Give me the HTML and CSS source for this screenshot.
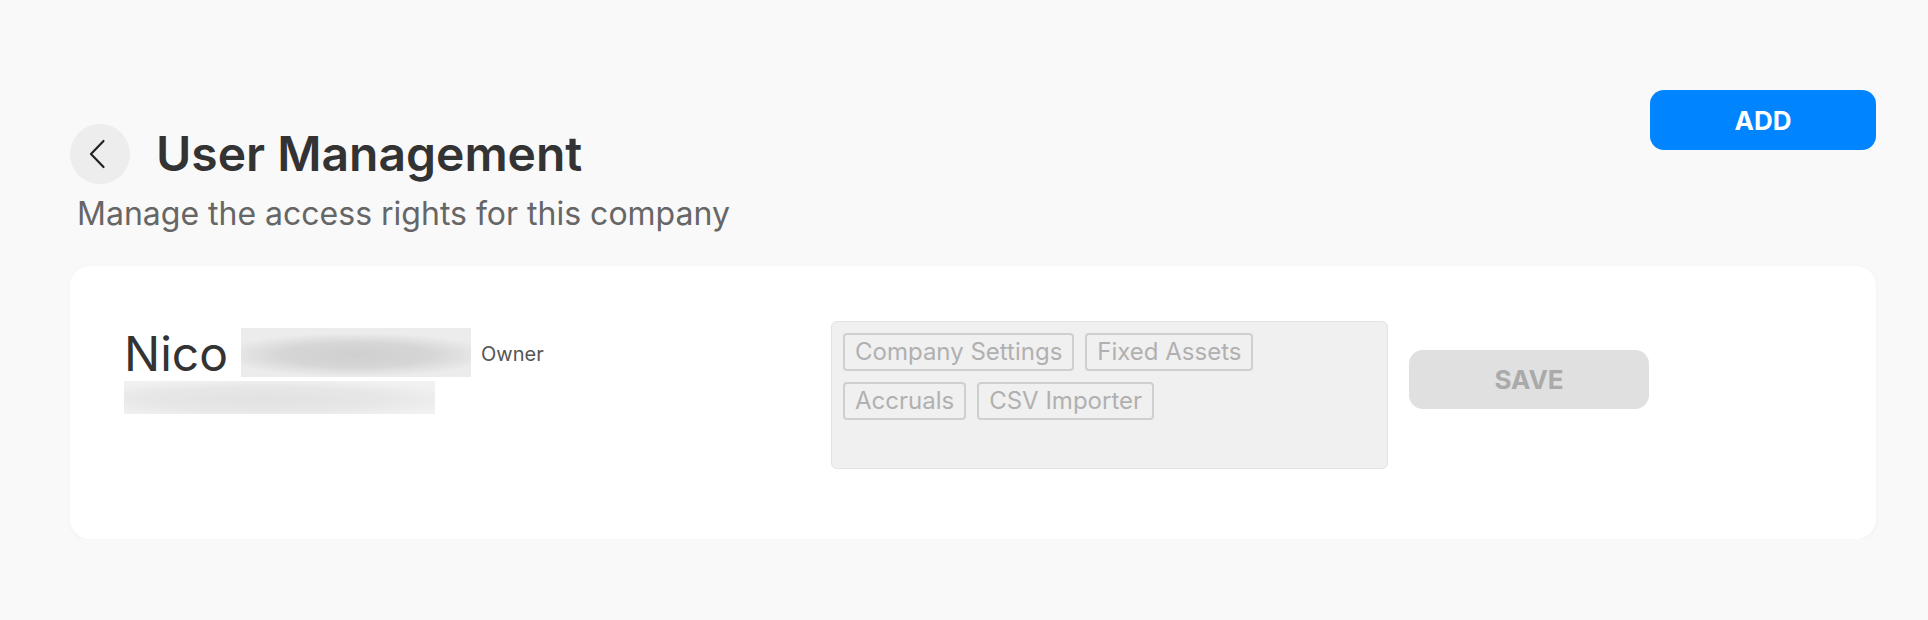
FILE: index.html
```html
<!DOCTYPE html>
<html lang="en">
<head>
<meta charset="utf-8">
<title>User Management</title>
<link rel="stylesheet" href="styles.css">
</head>
<body>
<div class="page">
  <div class="header">
    <div class="header-left">
      <div class="title-row">
        <button class="back" aria-label="Back">
          <svg width="20" height="30" viewBox="0 0 20 30"><path d="M15.5 2 L3 15 L15.5 28" fill="none" stroke="#222" stroke-width="2.2" stroke-linecap="round" stroke-linejoin="round"/></svg>
        </button>
        <h1 class="title">User Management</h1>
      </div>
      <p class="subtitle">Manage the access rights for this company</p>
    </div>
    <button class="add">ADD</button>
  </div>

  <div class="card">
    <div class="row">
      <div class="user">
        <div class="name-line">
          <span class="name">Nico</span>
          <span class="blur-name"></span>
          <span class="owner">Owner</span>
        </div>
        <div class="blur-email"></div>
      </div>
      <div class="perms">
        <span class="tag">Company Settings</span>
        <span class="tag">Fixed Assets</span>
        <span class="tag">Accruals</span>
        <span class="tag">CSV Importer</span>
      </div>
      <button class="save">SAVE</button>
    </div>
  </div>
</div>
</body>
</html>
```

FILE: styles.css
```css
* { box-sizing: border-box; }
html, body { margin: 0; padding: 0; }
body {
  background: #f9f9f9;
  font-family: Inter, "Noto Sans", sans-serif;
  color: #333;
}
.page {
  padding: 90px 52px 0 70px;
}
.header {
  display: flex;
  justify-content: space-between;
  align-items: flex-start;
}
.header-left {
  padding-top: 34px;
}
.title-row {
  display: flex;
  align-items: center;
  gap: 26px;
}
.back {
  width: 60px;
  height: 60px;
  border-radius: 50%;
  border: none;
  background: #ededed;
  display: flex;
  align-items: center;
  justify-content: center;
  padding: 0 4px 0 0;
  cursor: pointer;
}
.title {
  margin: 0;
  font-size: 48px;
  line-height: 58px;
  font-weight: 600;
  color: #333;
}
.subtitle {
  margin: 11px 0 0 0;
  padding-left: 7px;
  font-size: 32px;
  line-height: 38px;
  color: #666;
}
.add {
  width: 226px;
  height: 60px;
  border: none;
  border-radius: 14px;
  background: #0084ff;
  color: #fff;
  font-family: Inter, sans-serif;
  font-size: 26px;
  font-weight: 700;
  cursor: pointer;
}
.card {
  margin-top: 33px;
  background: #fff;
  border-radius: 20px;
  padding: 55px 54px 70px 54px;
  box-shadow: 0 1px 5px rgba(0, 0, 0, 0.04);
}
.row {
  display: flex;
  align-items: flex-start;
}
.user {
  width: 707px;
  padding-top: 4px;
}
.name-line {
  display: flex;
  align-items: center;
  height: 58px;
}
.name {
  font-size: 48px;
  line-height: 58px;
  font-weight: 400;
  color: #333;
}
.blur-name {
  display: block;
  width: 230px;
  height: 49px;
  margin-left: 13px;
  margin-top: -4px;
  background: radial-gradient(ellipse 60% 45% at 50% 55%, #cfcfcf 0%, #d6d6d6 55%, #ececec 100%);
}
.owner {
  margin-left: 10px;
  font-size: 20px;
  line-height: 24px;
  color: #555;
}
.blur-email {
  width: 311px;
  height: 33px;
  margin-top: -2px;
  background: radial-gradient(ellipse 65% 60% at 45% 55%, #e2e2e2 0%, #e7e7e7 60%, #f1f1f1 100%);
}
.perms {
  width: 557px;
  height: 148px;
  background: #f0f0f0;
  border: 1px solid #e2e2e2;
  border-radius: 6px;
  padding: 11px;
  display: flex;
  flex-wrap: wrap;
  align-content: flex-start;
  gap: 11px;
}
.tag {
  border: 2px solid #cfcfcf;
  border-radius: 4px;
  padding: 0 10px;
  font-size: 24px;
  line-height: 34px;
  color: #b0b0b0;
}
.save {
  margin-left: 21px;
  margin-top: 29px;
  width: 240px;
  height: 59px;
  border: none;
  border-radius: 14px;
  background: #e0e0e0;
  color: #aaa;
  font-family: Inter, sans-serif;
  font-size: 26px;
  font-weight: 700;
}
```
